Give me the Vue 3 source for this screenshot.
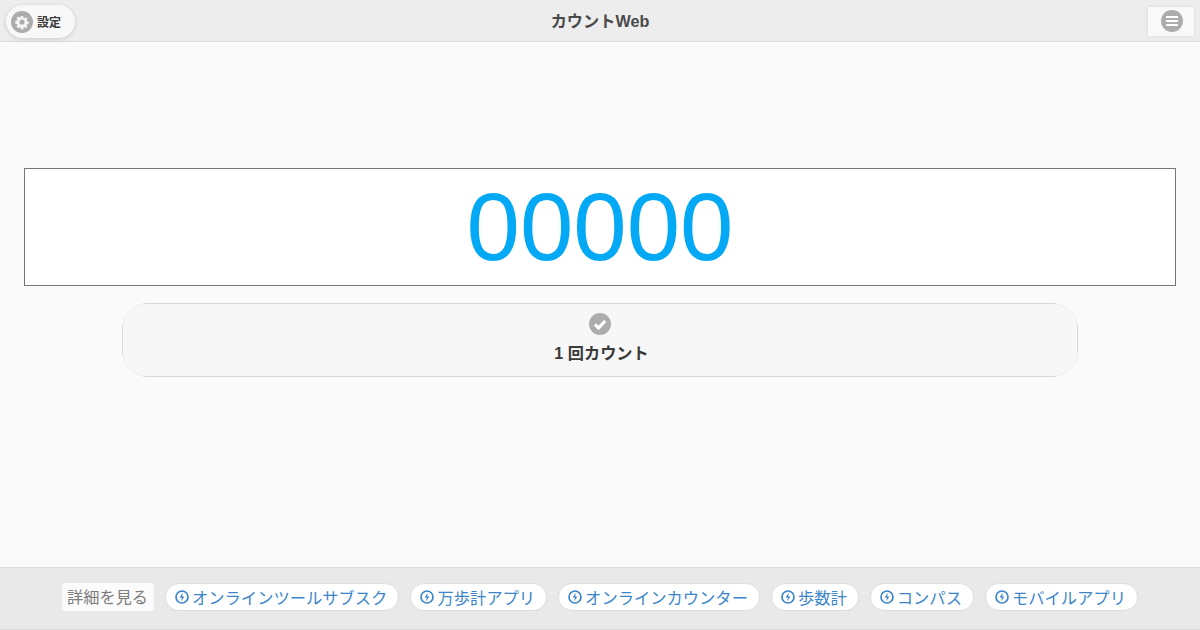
<script setup>
import { ref } from "vue";

const count = ref("00000");
const links = ["オンラインツールサブスク", "万歩計アプリ", "オンラインカウンター", "歩数計", "コンパス", "モバイルアプリ"];

function addCount() {
  count.value = String(Number(count.value) + 1).padStart(5, "0");
}
</script>

<template>
  <div class="page">
    <header class="top-bar">
      <button class="settings-btn">
        <span class="round-icon">
          <svg width="22" height="22" viewBox="0 0 22 22">
            <circle cx="11" cy="11" r="11" fill="#acacac" />
            <path d="M9.6 3.5h2.8l.4 2.1 1.3.6 1.8-1.2 2 2-1.2 1.8.6 1.3 2.1.4v2.8l-2.1.4-.6 1.3 1.2 1.8-2 2-1.8-1.2-1.3.6-.4 2.1H9.6l-.4-2.1-1.3-.6-1.8 1.2-2-2 1.2-1.8-.6-1.3-2.1-.4V9.6l2.1-.4.6-1.3-1.2-1.8 2-2 1.8 1.2 1.3-.6z" fill="#f4f4f4" transform="translate(2.2 2.2) scale(.8)" />
            <circle cx="11" cy="11" r="2.6" fill="#acacac" />
          </svg>
        </span>
        <span>設定</span>
      </button>
      <h1 class="title">カウントWeb</h1>
      <button class="menu-btn">
        <svg width="22" height="22" viewBox="0 0 22 22">
          <circle cx="11" cy="11" r="11" fill="#acacac" />
          <path d="M5 7h12M5 11h12M5 15h12" stroke="#fff" stroke-width="2" />
        </svg>
      </button>
    </header>

    <main class="content">
      <div class="counter">{{ count }}</div>
      <button class="count-btn" @click="addCount">
        <svg width="22" height="22" viewBox="0 0 22 22">
          <circle cx="11" cy="11" r="11" fill="#acacac" />
          <path d="M6 11.5l3.6 3.4L16.2 8" fill="none" stroke="#fff" stroke-width="3.2" />
        </svg>
        <span class="count-label">1 回カウント</span>
      </button>
    </main>

    <footer class="bottom-bar">
      <span class="more-label">詳細を見る</span>
      <a v-for="link in links" :key="link" class="link-pill" href="#">
        <svg width="14" height="14" viewBox="0 0 14 14">
          <circle cx="7" cy="7" r="6" fill="none" stroke="#3b86cb" stroke-width="1.7" />
          <path d="M7.8 2.8L4.6 7.6h2.2L6.2 11.2l3.2-4.8H7.2z" fill="#3b86cb" />
        </svg>
        <span>{{ link }}</span>
      </a>
    </footer>
  </div>
</template>

<style scoped>
.page {
  width: 1200px;
  height: 630px;
  display: flex;
  flex-direction: column;
  background: #fafafa;
  font-family: "Liberation Sans", "Noto Sans CJK JP", sans-serif;
  color: #333;
  overflow: hidden;
}

.top-bar {
  height: 41px;
  flex: none;
  display: flex;
  align-items: center;
  justify-content: space-between;
  padding: 0 6px;
  background: #ededed;
  border-bottom: 1px solid #dcdcdc;
  position: relative;
}

.title {
  position: absolute;
  left: 0;
  right: 0;
  top: 11px;
  margin: 0;
  font-size: 16.2px;
  line-height: 20px;
  font-weight: bold;
  text-align: center;
  color: #4a4a4a;
}

.settings-btn {
  height: 33px;
  width: 69px;
  margin-top: 2px;
  padding: 0 0 0 5px;
  display: flex;
  align-items: center;
  gap: 4px;
  border: 0;
  border-radius: 17px;
  background: #f8f8f8;
  box-shadow: 0 1px 4px rgba(0, 0, 0, 0.15);
  font: inherit;
  font-size: 12px;
  font-weight: bold;
  color: #3a3a3a;
}

.round-icon {
  display: flex;
}

.menu-btn {
  width: 46px;
  height: 29px;
  margin-top: 1px;
  display: flex;
  align-items: center;
  justify-content: center;
  padding: 0 0 0 1px;
  border: 0;
  background: #f9f9f9;
  box-shadow: 0 0 3px rgba(0, 0, 0, 0.1);
}

.content {
  flex: 1;
  display: flex;
  flex-direction: column;
  align-items: center;
  padding: 126px 24px 0;
}

.counter {
  width: 100%;
  height: 118px;
  box-sizing: border-box;
  border: 1px solid #777;
  background: #fff;
  color: #03a9f4;
  font-size: 96px;
  line-height: 116px;
  text-align: center;
}

/* the reference only shows the straight parts of the border clearly, corners nearly fade out */
.count-btn {
  width: 956px;
  height: 74px;
  margin-top: 17px;
  padding: 9px 0 0;
  box-sizing: border-box;
  display: flex;
  flex-direction: column;
  align-items: center;
  gap: 5px;
  border: 1px solid rgba(0, 0, 0, 0.035);
  border-radius: 26px;
  background-color: #f7f7f7;
  background-image:
    linear-gradient(#dcdcdc, #dcdcdc),
    linear-gradient(#dcdcdc, #dcdcdc),
    linear-gradient(#e2e2e2, #e2e2e2),
    linear-gradient(#dcdcdc, #dcdcdc);
  background-size: 913px 1px, 913px 1px, 1px 40px, 1px 32px;
  background-position: 21px 0, 21px 73px, 0 15px, 955px 17px;
  background-repeat: no-repeat;
  background-origin: border-box;
  background-clip: border-box;
  font: inherit;
  font-size: 16.2px;
  font-weight: bold;
  color: #3a3a3a;
}

.count-label {
  padding-left: 3px;
}

.bottom-bar {
  height: 63px;
  box-sizing: border-box;
  padding-bottom: 4px;
  flex: none;
  display: flex;
  align-items: center;
  justify-content: center;
  gap: 11px;
  background: #e9e9e9;
  border-top: 1px solid #dcdcdc;
  border-bottom: 1px solid #dcdcdc;
  font-size: 16.2px;
}

.more-label {
  padding: 2px 6px 2px 5px;
  background: #fbfbfb;
  border-radius: 3px;
  color: #7c7c7c;
  line-height: 24px;
}

.link-pill {
  height: 28px;
  box-sizing: border-box;
  display: flex;
  align-items: center;
  gap: 3px;
  padding: 0 11px 0 9px;
  border: 1px solid #dedede;
  border-radius: 15px;
  background: #fff;
  color: #3b86cb;
  font-size: 16.3px;
  text-decoration: none;
}
</style>
